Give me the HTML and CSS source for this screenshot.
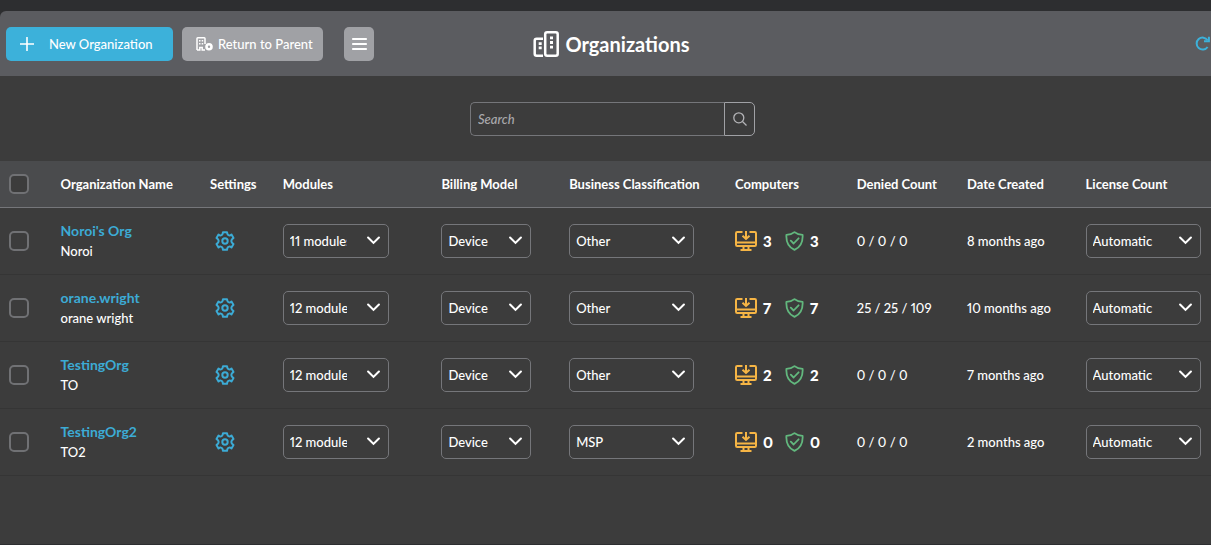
FILE: index.html
```html
<!DOCTYPE html>
<html lang="en">
<head>
<meta charset="utf-8">
<title>Organizations</title>
<link rel="stylesheet" href="styles.css">
</head>
<body>
<svg class="sprite" aria-hidden="true">
  <symbol id="gear" viewBox="0 0 20 20"><g fill="none" stroke="currentColor" stroke-width="2" stroke-linejoin="round"><path d="M8 1.200h4q.3 2.800 1.900 3.200q1.200.4 2.600-.9l2 3.400q-2.200 1.600-2.200 3.100q0 1.500 2.200 3.100l-2 3.400q-1.400-1.300-2.600-.9q-1.600.4-1.900 3.200h-4q-.3-2.800-1.900-3.200q-1.200-.4-2.600.9l-2-3.400q2.200-1.600 2.200-3.100q0-1.500-2.200-3.100l2-3.400q1.400 1.300 2.600.9Q7.700 4 8 1.200z"/><circle cx="10" cy="10" r="2.700"/></g></symbol>
  <symbol id="monitor" viewBox="0 0 22 20"><path d="M7.500 1H2.200Q1 1 1 2.200v11.600Q1 15 2.200 15h17.600q1.200 0 1.200-1.200V2.200Q21 1 19.800 1h-5.300M1 11.500h20M11 0v7.500M7.500 4.800l3.500 3.200 3.500-3.200M8.500 15v3.500M13.500 15v3.500M5.500 19h11" fill="none" stroke="currentColor" stroke-width="2"/></symbol>
  <symbol id="shield" viewBox="0 0 19 20"><path d="M9.500 1.100C7.500 2.800 4.500 3.800 1.400 3.900 1 10.500 2.600 15.700 9.500 18.900c6.900-3.200 8.500-8.400 8.100-15C14.500 3.800 11.500 2.800 9.500 1.100zM5.800 9.700l2.800 2.800L13.600 7.300" fill="none" stroke="currentColor" stroke-width="1.800" stroke-linejoin="round" stroke-linecap="round"/></symbol>
  <symbol id="chevron" viewBox="0 0 12 8"><path d="M1 1.200l5 5 5-5" fill="none" stroke="currentColor" stroke-width="1.900" stroke-linecap="round"/></symbol>
</svg>

<header class="toolbar">
  <div class="actions">
    <button class="btn btn-primary" type="button">
      <svg width="14" height="14" viewBox="0 0 14 14" aria-hidden="true"><path d="M7 .5v13M.5 7h13" stroke="currentColor" stroke-width="1.600" stroke-linecap="round"/></svg>
      <span>New Organization</span>
    </button>
    <button class="btn btn-muted" type="button">
      <svg width="17" height="14" viewBox="0 0 17 14" aria-hidden="true"><path d="M1 13V1.600Q1 .8 1.800.8h6.400q.8 0 .8.800V7M1 13h2.800v-2.500h2.400V13H9" fill="none" stroke="currentColor" stroke-width="1.500"/><path d="M3 3h1.500v1.500H3zM5.700 3h1.500v1.500H5.700zM3 6h1.500v1.500H3zM5.700 6h1.500v1.500H5.700z" fill="currentColor"/><circle cx="13" cy="9.800" r="2.500" fill="none" stroke="currentColor" stroke-width="2.600"/></svg>
      <span>Return to Parent</span>
    </button>
    <button class="btn btn-menu" type="button" aria-label="Menu">
      <svg width="15" height="12" viewBox="0 0 15 12" aria-hidden="true"><path d="M.8 1h13.400M.8 6h13.400M.8 11h13.400" stroke="currentColor" stroke-width="1.800" stroke-linecap="round"/></svg>
    </button>
  </div>
  <h1 class="title">
    <svg width="26" height="26" viewBox="0 0 26 26" aria-hidden="true"><g fill="none" stroke="currentColor" stroke-width="2.500"><rect x="12.200" y="1.300" width="12.500" height="23.400" rx="2"/><path d="M10 7.700H3.700Q1.700 7.700 1.700 9.700v13q0 2 2 2H10"/></g><path d="M17 5.500h3v2.800h-3zM17 10.100h3v2.800h-3zM17 14.700h3v2.800h-3zM5.700 11.200h3v2.800h-3zM5.700 15.400h3v2.800h-3z" fill="currentColor"/></svg>
    <span>Organizations</span>
  </h1>
  <button class="refresh" type="button" aria-label="Refresh">
    <svg width="16" height="15" viewBox="0 0 16 15" aria-hidden="true"><path d="M12.600 4.200A6 6 0 1 0 12.600 11" fill="none" stroke="currentColor" stroke-width="2"/><path d="M13.900.7v4.600H9" fill="none" stroke="currentColor" stroke-width="2"/></svg>
  </button>
</header>

<main>
  <form class="search" role="search">
    <input type="search" placeholder="Search" aria-label="Search">
    <button type="submit" aria-label="Run search">
      <svg width="14" height="14" viewBox="0 0 14 14" aria-hidden="true"><g fill="none" stroke="currentColor" stroke-width="1.300"><circle cx="5.800" cy="5.800" r="5"/><path d="M9.500 9.500l4 4"/></g></svg>
    </button>
  </form>

  <table class="orgs">
    <colgroup>
      <col class="c-check"><col class="c-name"><col class="c-settings"><col class="c-modules"><col class="c-billing"><col class="c-business"><col class="c-computers"><col class="c-denied"><col class="c-date"><col class="c-license">
    </colgroup>
    <thead>
      <tr>
        <th class="check"><input type="checkbox" aria-label="Select all"></th>
        <th>Organization Name</th><th>Settings</th><th>Modules</th><th>Billing Model</th><th>Business Classification</th><th>Computers</th><th>Denied Count</th><th>Date Created</th><th>License Count</th>
      </tr>
    </thead>
    <tbody>
      <tr>
        <td class="check"><input type="checkbox" aria-label="Select Noroi's Org"></td>
        <td><a class="org" href="#">Noroi's Org</a><span class="sub">Noroi</span></td>
        <td><button class="gear" type="button" aria-label="Settings"><svg><use href="#gear"/></svg></button></td>
        <td><div class="pick modules"><select aria-label="Modules"><option>11 modules</option></select><svg><use href="#chevron"/></svg></div></td>
        <td><div class="pick billing"><select aria-label="Billing Model"><option>Device</option></select><svg><use href="#chevron"/></svg></div></td>
        <td><div class="pick business"><select aria-label="Business Classification"><option>Other</option></select><svg><use href="#chevron"/></svg></div></td>
        <td><div class="counts"><svg class="monitor"><use href="#monitor"/></svg><b>3</b><svg class="shield"><use href="#shield"/></svg><b>3</b></div></td>
        <td>0 / 0 / 0</td>
        <td>8 months ago</td>
        <td><div class="pick license"><select aria-label="License Count"><option>Automatic</option></select><svg><use href="#chevron"/></svg></div></td>
      </tr>
      <tr>
        <td class="check"><input type="checkbox" aria-label="Select orane.wright"></td>
        <td><a class="org" href="#">orane.wright</a><span class="sub">orane wright</span></td>
        <td><button class="gear" type="button" aria-label="Settings"><svg><use href="#gear"/></svg></button></td>
        <td><div class="pick modules"><select aria-label="Modules"><option>12 modules</option></select><svg><use href="#chevron"/></svg></div></td>
        <td><div class="pick billing"><select aria-label="Billing Model"><option>Device</option></select><svg><use href="#chevron"/></svg></div></td>
        <td><div class="pick business"><select aria-label="Business Classification"><option>Other</option></select><svg><use href="#chevron"/></svg></div></td>
        <td><div class="counts"><svg class="monitor"><use href="#monitor"/></svg><b>7</b><svg class="shield"><use href="#shield"/></svg><b>7</b></div></td>
        <td>25 / 25 / 109</td>
        <td>10 months ago</td>
        <td><div class="pick license"><select aria-label="License Count"><option>Automatic</option></select><svg><use href="#chevron"/></svg></div></td>
      </tr>
      <tr>
        <td class="check"><input type="checkbox" aria-label="Select TestingOrg"></td>
        <td><a class="org" href="#">TestingOrg</a><span class="sub">TO</span></td>
        <td><button class="gear" type="button" aria-label="Settings"><svg><use href="#gear"/></svg></button></td>
        <td><div class="pick modules"><select aria-label="Modules"><option>12 modules</option></select><svg><use href="#chevron"/></svg></div></td>
        <td><div class="pick billing"><select aria-label="Billing Model"><option>Device</option></select><svg><use href="#chevron"/></svg></div></td>
        <td><div class="pick business"><select aria-label="Business Classification"><option>Other</option></select><svg><use href="#chevron"/></svg></div></td>
        <td><div class="counts"><svg class="monitor"><use href="#monitor"/></svg><b>2</b><svg class="shield"><use href="#shield"/></svg><b>2</b></div></td>
        <td>0 / 0 / 0</td>
        <td>7 months ago</td>
        <td><div class="pick license"><select aria-label="License Count"><option>Automatic</option></select><svg><use href="#chevron"/></svg></div></td>
      </tr>
      <tr>
        <td class="check"><input type="checkbox" aria-label="Select TestingOrg2"></td>
        <td><a class="org" href="#">TestingOrg2</a><span class="sub">TO2</span></td>
        <td><button class="gear" type="button" aria-label="Settings"><svg><use href="#gear"/></svg></button></td>
        <td><div class="pick modules"><select aria-label="Modules"><option>12 modules</option></select><svg><use href="#chevron"/></svg></div></td>
        <td><div class="pick billing"><select aria-label="Billing Model"><option>Device</option></select><svg><use href="#chevron"/></svg></div></td>
        <td><div class="pick business"><select aria-label="Business Classification"><option>MSP</option></select><svg><use href="#chevron"/></svg></div></td>
        <td><div class="counts"><svg class="monitor"><use href="#monitor"/></svg><b>0</b><svg class="shield"><use href="#shield"/></svg><b>0</b></div></td>
        <td>0 / 0 / 0</td>
        <td>2 months ago</td>
        <td><div class="pick license"><select aria-label="License Count"><option>Automatic</option></select><svg><use href="#chevron"/></svg></div></td>
      </tr>
    </tbody>
  </table>
</main>
</body>
</html>
```
FILE: styles.css
```css
* { box-sizing: border-box; }

body {
  margin: 0;
  min-height: 100vh;
  padding-top: 11px;
  background: #2d2e30;
  color: #fff;
  font: 500 13px/20px Lato, "Open Sans", sans-serif;
  font-variant-numeric: proportional-nums;
  display: flex;
  flex-direction: column;
  overflow-x: hidden;
}

button, input, select { font: inherit; font-variant-numeric: proportional-nums; color: inherit; margin: 0; }
button { cursor: pointer; border: 0; padding: 0; background: none; }
svg { display: block; flex: none; }
.sprite { position: absolute; width: 0; height: 0; }

.toolbar {
  display: grid;
  grid-template-columns: 1fr auto 1fr;
  align-items: center;
  height: 65px;
  padding-left: 6px;
  background: #5b5c60;
  border-top-left-radius: 6px;
}
.actions { display: flex; }
.btn {
  display: flex;
  align-items: center;
  height: 34px;
  padding: 0 14px;
  border-radius: 5px;
  white-space: nowrap;
}
.btn-primary { width: 167px; gap: 15px; background: #3cb1da; }
.btn-muted { width: 141px; gap: 5px; margin-left: 9px; background: #a0a1a5; }
.btn-menu { width: 30px; padding: 0; justify-content: center; margin-left: 21px; background: #a0a1a5; }

.title {
  display: flex;
  align-items: center;
  gap: 6px;
  margin: 0;
  padding-left: 6px;
  font-size: 20px;
  font-weight: 700;
  line-height: 26px;
}
.refresh { justify-self: end; color: #3cb1da; }

main {
  flex: 1;
  padding-top: 26px;
  background: #3c3c3c;
  border-bottom: 1px solid #2d2e30;
}

.search {
  display: flex;
  justify-content: center;
  height: 34px;
  margin-bottom: 25px;
  padding-left: 14px;
}
.search input {
  width: 254px;
  padding: 0 7px;
  border: 1px solid #75767a;
  border-right: 0;
  border-radius: 5px 0 0 5px;
  background: transparent;
  outline: 0;
  appearance: none;
}
.search input::placeholder { color: #a9a9ac; font-style: italic; opacity: 1; }
.search button {
  display: grid;
  place-items: center;
  width: 31px;
  border: 1px solid #a0a1a5;
  border-radius: 0 5px 5px 0;
  color: #b4b4b7;
}

.orgs {
  width: 100%;
  table-layout: fixed;
  border-collapse: separate;
  border-spacing: 0;
}
.c-check { width: 5%; }
.c-name { width: 12.35%; }
.c-settings { width: 6%; }
.c-modules { width: 13.1%; }
.c-billing { width: 10.55%; }
.c-business { width: 13.7%; }
.c-computers { width: 10.05%; }
.c-denied { width: 9.1%; }
.c-date { width: 9.8%; }

th {
  height: 47px;
  padding: 0;
  background: #4a4b4d;
  border-bottom: 1px solid #75767a;
  text-align: left;
  font-weight: 700;
  white-space: nowrap;
}
td {
  height: 67px;
  padding: 0;
  border-bottom: 1px solid #353535;
  white-space: nowrap;
}
.check { padding-left: 9px; }
.check input {
  display: block;
  width: 20px;
  height: 20px;
  appearance: none;
  border: 2px solid #707174;
  border-radius: 5px;
  background: #3c3c3c;
}

.org {
  display: block;
  color: #3cabd5;
  font-size: 14px;
  font-weight: 700;
  text-decoration: none;
}
.sub { display: block; }
.gear { display: block; margin-left: 5px; color: #3cabd5; }
.gear svg { width: 20px; height: 20px; }

.pick { position: relative; height: 34px; }
.pick select {
  width: 100%;
  height: 100%;
  padding: 0 24px 0 6px;
  appearance: none;
  border: 1px solid #75767a;
  border-radius: 5px;
  background: #3c3c3c;
}
.pick svg {
  position: absolute;
  top: 12px;
  right: 9px;
  width: 13px;
  height: 9px;
  pointer-events: none;
}
.modules { width: 106px; }
.billing { width: 90px; }
.business { width: 125px; }
.license { width: 115px; }
.modules select { padding-right: 41px; }

.counts { display: flex; align-items: center; }
.counts b { width: 22px; padding-left: 6px; font-size: 15px; font-weight: 900; }
.monitor { width: 22px; height: 20px; color: #f6b545; }
.shield { width: 19px; height: 20px; margin-left: 6px; color: #62b87e; }
```
